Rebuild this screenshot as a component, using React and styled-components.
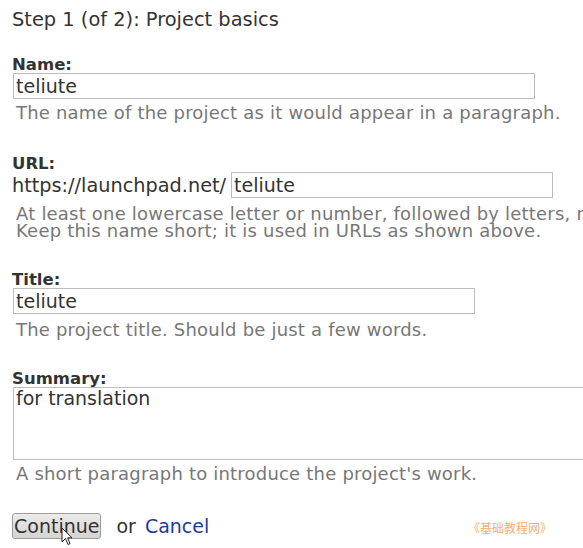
import React from "react";
import styled, { createGlobalStyle } from "styled-components";

const GlobalStyle = createGlobalStyle`
  html, body {
    margin: 0;
    padding: 0;
    background: #ffffff;
    overflow: hidden;
  }
  body {
    font-family: "DejaVu Sans", "Open Sans", sans-serif;
    color: #333333;
  }
`;

const Page = styled.div`
  position: relative;
  width: 583px;
  height: 548px;
  padding-left: 12px;
  box-sizing: border-box;
`;

const Heading = styled.h2`
  margin: 0;
  padding-top: 7px;
  font-size: 19.4px;
  font-weight: normal;
  line-height: 26px;
  color: #333;
`;

const Field = styled.div`
  margin-top: ${(p) => p.$top || 20}px;
`;

const Label = styled.label`
  display: block;
  font-size: 16.5px;
  font-weight: bold;
  line-height: 16px;
  color: #333;
`;

const TextInput = styled.input`
  display: block;
  box-sizing: border-box;
  width: ${(p) => p.$width}px;
  height: 26px;
  margin: 0 0 0 1px;
  padding: 0 2px;
  border: 1px solid #bdbdbd;
  font-family: inherit;
  font-size: 19px;
  color: #333;
  background: #fff;
  outline: none;
`;

const UrlRow = styled.div`
  display: flex;
  align-items: center;
  gap: 4px;
  white-space: nowrap;
  font-size: 19.3px;
  color: #333;
`;

const TextArea = styled.textarea`
  display: block;
  box-sizing: border-box;
  width: 600px;
  height: 73px;
  margin: 0 0 0 1px;
  padding: 0 2px;
  border: 1px solid #bdbdbd;
  font-family: inherit;
  font-size: 19px;
  line-height: 21px;
  color: #333;
  resize: none;
  outline: none;
`;

const Hint = styled.p`
  margin: ${(p) => p.$top || 5}px 0 0;
  padding-left: 4px;
  font-size: 18px;
  letter-spacing: 0.2px;
  line-height: 17px;
  color: #777;
  white-space: nowrap;
`;

const Actions = styled.div`
  display: flex;
  align-items: center;
  margin-top: 31px;
  font-size: 19px;
`;

const Button = styled.button`
  height: 26px;
  padding: 0 1px;
  border: 1px solid #9c9c9c;
  border-radius: 3px;
  background: linear-gradient(#ecebea, #d6d4d1);
  font-family: inherit;
  font-size: 19px;
  color: #333;
`;

const Or = styled.span`
  margin-left: 15px;
  color: #333;
`;

const CancelLink = styled.a`
  margin-left: 9px;
  color: #1c3b9e;
  text-decoration: none;
`;

const Watermark = styled.span`
  position: absolute;
  right: 31px;
  bottom: 12px;
  font-family: "Noto Sans CJK SC", sans-serif;
  font-size: 12px;
  color: #f7ad74;
`;

const Cursor = styled.svg`
  position: absolute;
  left: 61px;
  top: 527px;
`;

export default function App() {
  return (
    <Page>
      <GlobalStyle />
      <Heading>Step 1 (of 2): Project basics</Heading>

      <Field $top={24}>
        <Label>Name:</Label>
        <TextInput $width={522} defaultValue="teliute" />
        <Hint>The name of the project as it would appear in a paragraph.</Hint>
      </Field>

      <Field $top={35}>
        <Label>URL:</Label>
        <UrlRow>
          https://launchpad.net/
          <TextInput $width={322} defaultValue="teliute" />
        </UrlRow>
        <Hint $top={7}>
          At least one lowercase letter or number, followed by letters, numbers, dots, hyphens or plusses.
          <br />
          Keep this name short; it is used in URLs as shown above.
        </Hint>
      </Field>

      <Field $top={33}>
        <Label>Title:</Label>
        <TextInput $width={462} defaultValue="teliute" />
        <Hint $top={7}>The project title. Should be just a few words.</Hint>
      </Field>

      <Field $top={33}>
        <Label>Summary:</Label>
        <TextArea defaultValue="for translation" />
        <Hint>A short paragraph to introduce the project's work.</Hint>
      </Field>

      <Actions>
        <Button>Continue</Button>
        <Or>or</Or>
        <CancelLink href="#">Cancel</CancelLink>
      </Actions>

      <Watermark>《基础教程网》</Watermark>

      <Cursor width="12" height="20" viewBox="0 0 12 20">
        <path d="M1 1 L1 15 L4.5 11.5 L7 17.5 L9 16.6 L6.6 10.8 L11 10.8 Z" fill="#ffffff" stroke="#222" strokeWidth="1" />
      </Cursor>
    </Page>
  );
}
